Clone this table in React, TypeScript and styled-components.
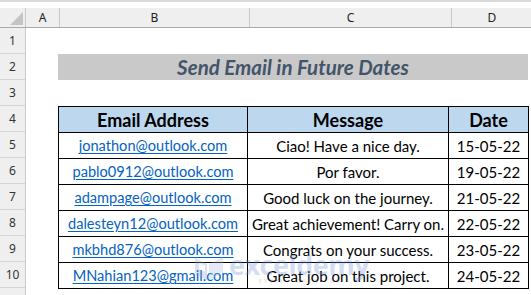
import React from "react";
import styled, { createGlobalStyle } from "styled-components";

const GlobalStyle = createGlobalStyle`
  html, body {
    margin: 0;
    padding: 0;
    background: #ffffff;
    overflow: hidden;
  }
`;

const rows = [
  { email: "jonathon@outlook.com", message: "Ciao! Have a nice day.", date: "15-05-22" },
  { email: "pablo0912@outlook.com", message: "Por favor.", date: "19-05-22" },
  { email: "adampage@outlook.com", message: "Good luck on the journey.", date: "21-05-22" },
  { email: "dalesteyn12@outlook.com", message: "Great achievement! Carry on.", date: "22-05-22" },
  { email: "mkbhd876@outlook.com", message: "Congrats on your success.", date: "23-05-22" },
  { email: "MNahian123@gmail.com", message: "Great job on this project.", date: "24-05-22" },
];

const colWidths = [189, 201, 80];

const StyledFrame = styled.div`
  position: relative;
  width: 531px;
  height: 295px;
  overflow: hidden;
  background: #ffffff;
`;

const StyledTopStrip = styled.div`
  height: 6px;
  background: #ffffff;
  border-top: 2px solid #dadada;
`;

const StyledColHeaderRow = styled.div`
  display: flex;
  height: 19px;
  background: #efefef;
  border-bottom: 1px solid #ababab;
`;

const StyledCorner = styled.div`
  position: relative;
  width: 25px;
  flex: none;
  border-right: 1px solid #c8c8c8;
  &::after {
    content: "";
    position: absolute;
    right: 2px;
    bottom: 2px;
    border-style: solid;
    border-width: 0 0 13px 13px;
    border-color: transparent transparent #c4c4c4 transparent;
  }
`;

const StyledColHead = styled.div<{ $w: number }>`
  width: ${(p) => p.$w}px;
  flex: none;
  display: flex;
  align-items: center;
  justify-content: center;
  border-right: 1px solid #c8c8c8;
  font-family: "Noto Sans", sans-serif;
  font-size: 12px;
  color: #222;
`;

const StyledBody = styled.div`
  display: flex;
`;

const StyledRowHeaders = styled.div`
  width: 25px;
  flex: none;
  background: #efefef;
  border-right: 1px solid #c8c8c8;
`;

const StyledRowNum = styled.div`
  height: 26px;
  box-sizing: border-box;
  border-bottom: 1px solid #d4d4d4;
  display: flex;
  align-items: center;
  justify-content: center;
  font-family: "Noto Sans", sans-serif;
  font-size: 12px;
  color: #333;
`;

const StyledSheet = styled.div`
  padding-left: 32px;
  display: flex;
  flex-direction: column;
`;

const StyledBlank = styled.div`
  height: 26px;
`;

const StyledTitle = styled.div`
  width: 470px;
  height: 26px;
  background: #c9c9c9;
  display: flex;
  align-items: center;
  justify-content: center;
  font-family: Lato, "Liberation Sans", sans-serif;
  font-weight: 700;
  font-style: italic;
  font-size: 20.5px;
  color: #44546a;
`;

const StyledTable = styled.div`
  border-top: 1px solid #000;
  border-left: 1px solid #000;
  width: max-content;
`;

const StyledTr = styled.div`
  display: flex;
  height: 26px;
`;

const StyledCell = styled.div<{ $w: number; $head?: boolean }>`
  width: ${(p) => p.$w}px;
  box-sizing: border-box;
  border-right: 1px solid #000;
  border-bottom: 1px solid #000;
  display: flex;
  align-items: center;
  justify-content: center;
  background: ${(p) => (p.$head ? "#bdd7ee" : "#ffffff")};
  font-family: Lato, "Liberation Sans", sans-serif;
  font-weight: ${(p) => (p.$head ? 700 : 400)};
  font-size: ${(p) => (p.$head ? "18px" : "15px")};
  color: #000;
  white-space: nowrap;
`;

const StyledLink = styled.span`
  color: #0563c1;
  font-size: 14.6px;
  text-decoration: underline;
  text-underline-offset: 2px;
`;

const StyledWatermark = styled.div`
  position: absolute;
  left: 193px;
  top: 251px;
  display: flex;
  align-items: center;
  gap: 4px;
  opacity: 0.3;
  pointer-events: none;
`;

const StyledMarkText = styled.div`
  display: flex;
  flex-direction: column;
  align-items: center;
  line-height: 1;
`;

const StyledMarkName = styled.span`
  font-family: "Open Sans", sans-serif;
  font-weight: 700;
  font-size: 27px;
  color: #6f8fd8;
  letter-spacing: -0.5px;
`;

const StyledMarkSub = styled.span`
  font-family: "Open Sans", sans-serif;
  font-size: 6px;
  letter-spacing: 2px;
  color: #8a8a8a;
`;

const colLetters = [
  { l: "A", w: 33 },
  { l: "B", w: 189 },
  { l: "C", w: 201 },
  { l: "D", w: 80 },
  { l: "", w: 40 },
];

export default function App() {
  return (
    <StyledFrame>
      <GlobalStyle />
      <StyledTopStrip />
      <StyledColHeaderRow>
        <StyledCorner />
        {colLetters.map((c, i) => (
          <StyledColHead key={i} $w={c.w}>
            {c.l}
          </StyledColHead>
        ))}
      </StyledColHeaderRow>
      <StyledBody>
        <StyledRowHeaders>
          {Array.from({ length: 11 }, (_, i) => (
            <StyledRowNum key={i}>{i < 10 ? i + 1 : ""}</StyledRowNum>
          ))}
        </StyledRowHeaders>
        <StyledSheet>
          <StyledBlank />
          <StyledTitle>Send Email in Future Dates</StyledTitle>
          <StyledBlank />
          <StyledTable>
            <StyledTr>
              <StyledCell $w={colWidths[0]} $head>Email Address</StyledCell>
              <StyledCell $w={colWidths[1]} $head>Message</StyledCell>
              <StyledCell $w={colWidths[2]} $head>Date</StyledCell>
            </StyledTr>
            {rows.map((r) => (
              <StyledTr key={r.email}>
                <StyledCell $w={colWidths[0]}>
                  <StyledLink>{r.email}</StyledLink>
                </StyledCell>
                <StyledCell $w={colWidths[1]}>{r.message}</StyledCell>
                <StyledCell $w={colWidths[2]}>{r.date}</StyledCell>
              </StyledTr>
            ))}
          </StyledTable>
        </StyledSheet>
      </StyledBody>
      <StyledWatermark>
        <svg width="32" height="28" viewBox="0 0 32 28">
          <path d="M2 4 L14 10 L14 26 L2 20 Z" fill="#8aa3d6" />
          <path d="M16 10 L30 3 L30 19 L16 26 Z" fill="#a9b9dc" />
          <path d="M6 9 L12 12 L12 18 L6 15 Z" fill="#ffffff" />
        </svg>
        <StyledMarkText>
          <StyledMarkName>exceldemy</StyledMarkName>
          <StyledMarkSub>EXCEL · DATA · BI</StyledMarkSub>
        </StyledMarkText>
      </StyledWatermark>
    </StyledFrame>
  );
}
